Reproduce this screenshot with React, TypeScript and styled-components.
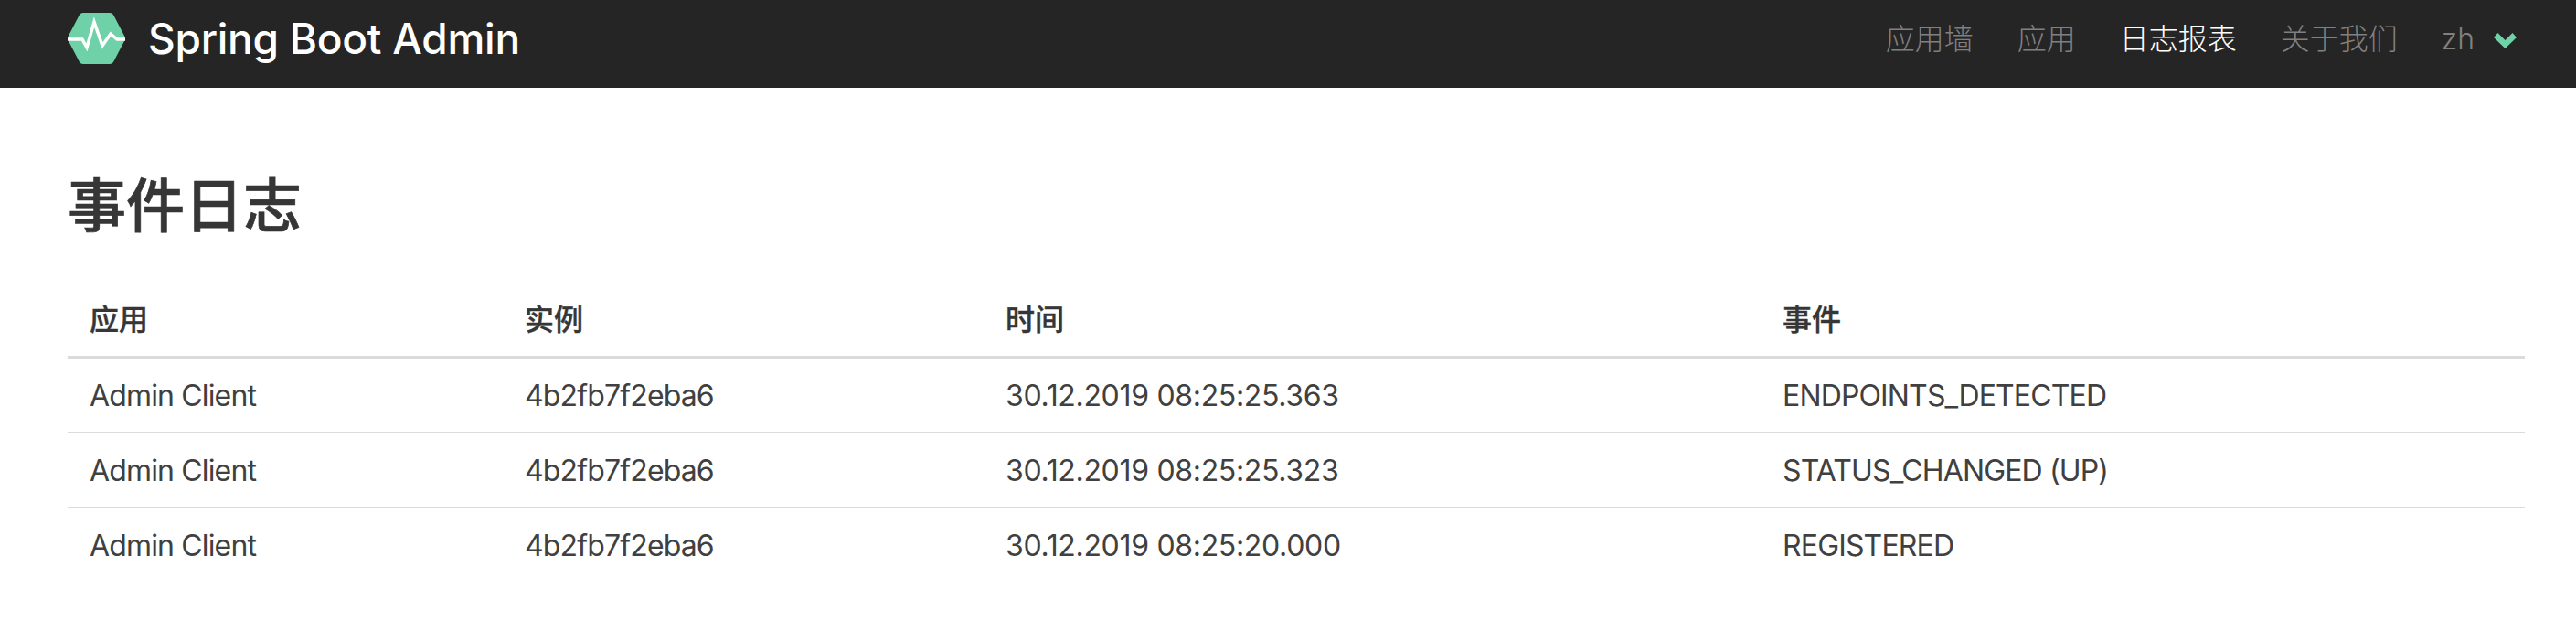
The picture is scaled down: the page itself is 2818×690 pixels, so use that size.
import React from 'react';
import styled, { createGlobalStyle } from 'styled-components';

const NAV_ITEMS = [
  { label: '应用墙' },
  { label: '应用' },
  { label: '日志报表', active: true },
  { label: '关于我们' },
];

const EVENTS = [
  { app: 'Admin Client', instance: '4b2fb7f2eba6', time: '30.12.2019 08:25:25.363', event: 'ENDPOINTS_DETECTED' },
  { app: 'Admin Client', instance: '4b2fb7f2eba6', time: '30.12.2019 08:25:25.323', event: 'STATUS_CHANGED (UP)' },
  { app: 'Admin Client', instance: '4b2fb7f2eba6', time: '30.12.2019 08:25:20.000', event: 'REGISTERED' },
];

const Logo = () => (
  <LogoSvg viewBox="0 0 63 56">
    <path
      d="M17 0H46Q49 0 50.5 3L62.5 26Q63.5 28 62.5 30L50.5 53Q49 56 46 56H17Q14 56 12.5 53L.5 30Q-.5 28 .5 26L12.5 3Q14 0 17 0Z"
      fill="#6fd1a7"
    />
    <path
      d="M0 29H16L21 38L29 10L38 36L47 23L54 29H63"
      fill="none"
      stroke="#fff"
      strokeWidth="3.5"
    />
  </LogoSvg>
);

const Chevron = () => (
  <ChevronSvg viewBox="0 0 25 17">
    <path d="M0 5L4.5 0L12.5 8L20.5 0L25 5L12.5 17Z" fill="#6fd1a7" />
  </ChevronSvg>
);

const App = () => (
  <>
    <GlobalStyle />
    <NavBar>
      <Brand>
        <Logo />
        <BrandName>Spring Boot Admin</BrandName>
      </Brand>
      <NavMenu>
        {NAV_ITEMS.map((item) => (
          <NavItem key={item.label} $active={item.active}>
            {item.label}
          </NavItem>
        ))}
        <LangSwitch>
          zh
          <Chevron />
        </LangSwitch>
      </NavMenu>
    </NavBar>
    <Section>
      <Title>事件日志</Title>
      <Table>
        <colgroup>
          <col style={{ width: 476 }} />
          <col style={{ width: 526 }} />
          <col style={{ width: 850 }} />
          <col />
        </colgroup>
        <thead>
          <tr>
            <HeadCell>应用</HeadCell>
            <HeadCell>实例</HeadCell>
            <HeadCell>时间</HeadCell>
            <HeadCell>事件</HeadCell>
          </tr>
        </thead>
        <tbody>
          {EVENTS.map((row) => (
            <Row key={row.time}>
              <Cell>{row.app}</Cell>
              <Cell>{row.instance}</Cell>
              <TimeCell>{row.time}</TimeCell>
              <Cell>{row.event}</Cell>
            </Row>
          ))}
        </tbody>
      </Table>
    </Section>
  </>
);

export default App;

const GlobalStyle = createGlobalStyle`
  html, body {
    margin: 0;
    background: #fff;
    color: #363636;
    font-family: Inter, "Noto Sans CJK SC", sans-serif;
  }
  * {
    box-sizing: border-box;
  }
`;

const NavBar = styled.nav`
  display: flex;
  align-items: center;
  justify-content: space-between;
  height: 96px;
  padding: 0 65px 0 74px;
  background: #252525;
`;

const Brand = styled.div`
  display: flex;
  align-items: center;
  gap: 25px;
  margin-bottom: 12px;
`;

const LogoSvg = styled.svg`
  display: block;
  width: 63px;
  height: 56px;
`;

const BrandName = styled.span`
  color: #fff;
  font-size: 46px;
  font-weight: 500;
  letter-spacing: -0.25px;
  line-height: 1;
`;

const NavMenu = styled.div`
  display: flex;
  align-items: center;
  gap: 48px;
  margin-bottom: 10px;
`;

const NavItem = styled.a<{ $active?: boolean }>`
  color: ${({ $active }) => ($active ? '#fff' : '#808080')};
  font-size: 32px;
  font-weight: 300;
  line-height: 1.2;
`;

const LangSwitch = styled.div`
  display: flex;
  align-items: center;
  gap: 21px;
  color: #808080;
  font-size: 32px;
  font-weight: 300;
  line-height: 1.2;
`;

const ChevronSvg = styled.svg`
  display: block;
  width: 25px;
  height: 17px;
  margin-top: 4px;
`;

const Section = styled.section`
  padding: 93px 56px 0 74px;
`;

const Title = styled.h1`
  margin: 0 0 47px;
  color: #363636;
  font-size: 64px;
  font-weight: 500;
  line-height: 1.125;
  -webkit-text-stroke: 0.7px #363636;
`;

const Table = styled.table`
  width: 100%;
  table-layout: fixed;
  border-collapse: collapse;
`;

const HeadCell = styled.th`
  height: 83px;
  padding: 0 24px 3px;
  border-bottom: 4px solid #dbdbdb;
  color: #363636;
  font-size: 32px;
  font-weight: 500;
  text-align: left;
  -webkit-text-stroke: 0.4px #363636;
`;

const Row = styled.tr`
  &:not(:last-child) td {
    border-bottom: 2px solid #dbdbdb;
  }
`;

const Cell = styled.td`
  height: 82px;
  padding: 0 24px;
  color: #404040;
  font-size: 32px;
  letter-spacing: -0.85px;
`;

const TimeCell = styled(Cell)`
  letter-spacing: -0.32px;
`;
